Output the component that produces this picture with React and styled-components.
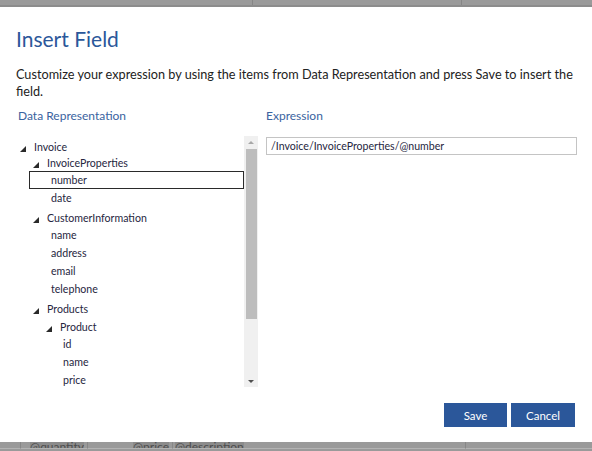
import React from "react";
import styled, { createGlobalStyle } from "styled-components";

const GlobalStyle = createGlobalStyle`
  html, body { margin: 0; padding: 0; background: #ffffff; overflow: hidden; }
  body { font-family: Lato, "Open Sans", sans-serif; }
  * { box-sizing: border-box; }
`;

const Page = styled.div`
  width: 592px;
  height: 451px;
  display: flex;
  flex-direction: column;
  overflow: hidden;
`;

const TopBar = styled.div`
  height: 7px;
  flex: none;
  display: flex;
  background: #9a9a9a;
  border-bottom: 2px solid #8c8c8c;
`;

const StripCell = styled.div`
  flex: ${p => (p.$w ? `0 0 ${p.$w}px` : "1 1 auto")};
  border-right: ${p => (p.$last ? "none" : "1px solid #868686")};
`;

const Dialog = styled.div`
  flex: 1 1 auto;
  display: flex;
  flex-direction: column;
  padding: 17px 15px 15px 16px;
  background: #ffffff;
`;

const Title = styled.h1`
  margin: 0;
  font-family: Lato, sans-serif;
  font-weight: 400;
  font-size: 21px;
  line-height: 30px;
  color: #2b579a;
`;

const Description = styled.p`
  margin: 12px 0 0;
  width: 561px;
  font-size: 12.7px;
  line-height: 17px;
  color: #222222;
`;

const Columns = styled.div`
  display: grid;
  grid-template-columns: 242px 311px;
  column-gap: 8px;
  margin-top: 8px;
`;

const Column = styled.div`
  display: flex;
  flex-direction: column;
`;

const SectionLabel = styled.div`
  height: 16px;
  line-height: 16px;
  font-size: 12px;
  color: #3a63a0;
  margin-left: ${p => p.$indent || 0}px;
`;

const TreePanel = styled.div`
  margin-top: 12px;
  height: 251px;
  display: flex;
  overflow: hidden;
`;

const TreeContent = styled.div`
  flex: 1 1 auto;
  padding-top: 3px;
  overflow: hidden;
`;

const Header = styled.div`
  display: flex;
  align-items: center;
  height: 16px;
  margin-top: ${p => p.$mt || 0}px;
  padding-left: ${p => 4 + p.$level * 13}px;
  font-size: 10.6px;
  color: #26263e;
  white-space: nowrap;
`;

const Expander = styled.span`
  flex: none;
  width: 0;
  height: 0;
  margin-right: 8px;
  margin-top: 3px;
  border-left: 6px solid transparent;
  border-bottom: 6px solid #2a2a2a;
`;

const Leaf = styled.div`
  height: 18px;
  display: flex;
  align-items: center;
  margin-left: 13px;
  padding-left: ${p => p.$pad}px;
  font-size: 10.6px;
  color: #26263e;
  white-space: nowrap;
  border: 1px solid ${p => (p.$selected ? "#2a2a2a" : "transparent")};
`;

const ScrollBar = styled.div`
  flex: 0 0 14px;
  display: flex;
  flex-direction: column;
  background: #f0f0f0;
`;

const ScrollArrow = styled.div`
  height: 12px;
  flex: none;
  display: flex;
  align-items: center;
  justify-content: center;
  &::after {
    content: "";
    width: 0;
    height: 0;
    border-left: 3px solid transparent;
    border-right: 3px solid transparent;
    ${p =>
      p.$down
        ? "border-top: 3px solid #505050;"
        : "border-bottom: 3px solid #a8a8a8;"}
  }
`;

const ScrollTrack = styled.div`
  flex: 1 1 auto;
  padding: 1px 1px 0 2px;
`;

const ScrollThumb = styled.div`
  height: 170px;
  background: #bdbdbd;
`;

const ExpressionInput = styled.input`
  margin-top: 13px;
  height: 18px;
  width: 311px;
  padding: 0 4px;
  border: 1px solid #c4c4c4;
  font-family: Lato, sans-serif;
  font-size: 10.6px;
  color: #26263e;
  outline: none;
`;

const Footer = styled.div`
  margin-top: auto;
  display: flex;
  justify-content: flex-end;
  gap: 4px;
  padding-right: 2px;
`;

const Button = styled.button`
  width: ${p => p.$w}px;
  height: 24px;
  border: none;
  background: #2b579a;
  color: #ffffff;
  font-family: Lato, sans-serif;
  font-size: 11.5px;
  cursor: pointer;
`;

const BottomBar = styled.div`
  flex: 0 0 9px;
  display: flex;
  background: #9a9a9a;
  overflow: hidden;
`;

const BottomCell = styled.div`
  flex: ${p => (p.$w ? `0 0 ${p.$w}px` : "1 1 auto")};
  height: 6px;
  display: flex;
  justify-content: ${p => (p.$right ? "flex-end" : "flex-start")};
  align-items: flex-end;
  padding: 0 3px 0 2px;
  border-right: ${p => (p.$last ? "none" : "1px solid #878787")};
  border-bottom: 1px solid #b3b3b3;
  overflow: hidden;
  box-sizing: content-box;
`;

const CutText = styled.span`
  font-size: 12px;
  line-height: 12px;
  margin-bottom: -5px;
  color: #4d4d4d;
  background: #8b8b8b;
  white-space: nowrap;
`;

const tree = [
  { type: "h", label: "Invoice", level: 0 },
  { type: "h", label: "InvoiceProperties", level: 1 },
  { type: "l", label: "number", pad: 21, selected: true },
  { type: "l", label: "date", pad: 21 },
  { type: "h", label: "CustomerInformation", level: 1, mt: 3 },
  { type: "l", label: "name", pad: 21 },
  { type: "l", label: "address", pad: 21 },
  { type: "l", label: "email", pad: 21 },
  { type: "l", label: "telephone", pad: 21 },
  { type: "h", label: "Products", level: 1, mt: 3 },
  { type: "h", label: "Product", level: 2, mt: 2 },
  { type: "l", label: "id", pad: 33 },
  { type: "l", label: "name", pad: 33 },
  { type: "l", label: "price", pad: 33 },
  { type: "l", label: "quantity", pad: 33 },
  { type: "l", label: "description", pad: 33 },
];

export default function App() {
  return (
    <Page>
      <GlobalStyle />
      <TopBar>
        <StripCell $w={253} />
        <StripCell $w={209} />
        <StripCell $last />
      </TopBar>
      <Dialog>
        <Title>Insert Field</Title>
        <Description>
          Customize your expression by using the items from Data Representation and press Save to insert the field.
        </Description>
        <Columns>
          <Column>
            <SectionLabel $indent={2}>Data Representation</SectionLabel>
            <TreePanel>
              <TreeContent>
                {tree.map((n, i) =>
                  n.type === "h" ? (
                    <Header key={i} $level={n.level} $mt={n.mt}>
                      <Expander />
                      {n.label}
                    </Header>
                  ) : (
                    <Leaf key={i} $pad={n.pad} $selected={n.selected}>
                      {n.label}
                    </Leaf>
                  )
                )}
              </TreeContent>
              <ScrollBar>
                <ScrollArrow />
                <ScrollTrack>
                  <ScrollThumb />
                </ScrollTrack>
                <ScrollArrow $down />
              </ScrollBar>
            </TreePanel>
          </Column>
          <Column>
            <SectionLabel>Expression</SectionLabel>
            <ExpressionInput readOnly value="/Invoice/InvoiceProperties/@number" />
          </Column>
        </Columns>
        <Footer>
          <Button $w={63}>Save</Button>
          <Button $w={64}>Cancel</Button>
        </Footer>
      </Dialog>
      <BottomBar>
        <BottomCell $w={15} />
        <BottomCell $w={61} $right>
          <CutText>@quantity</CutText>
        </BottomCell>
        <BottomCell $w={79} $right>
          <CutText>@price</CutText>
        </BottomCell>
        <BottomCell $w={287}>
          <CutText>@description</CutText>
        </BottomCell>
        <BottomCell $last />
      </BottomBar>
    </Page>
  );
}
